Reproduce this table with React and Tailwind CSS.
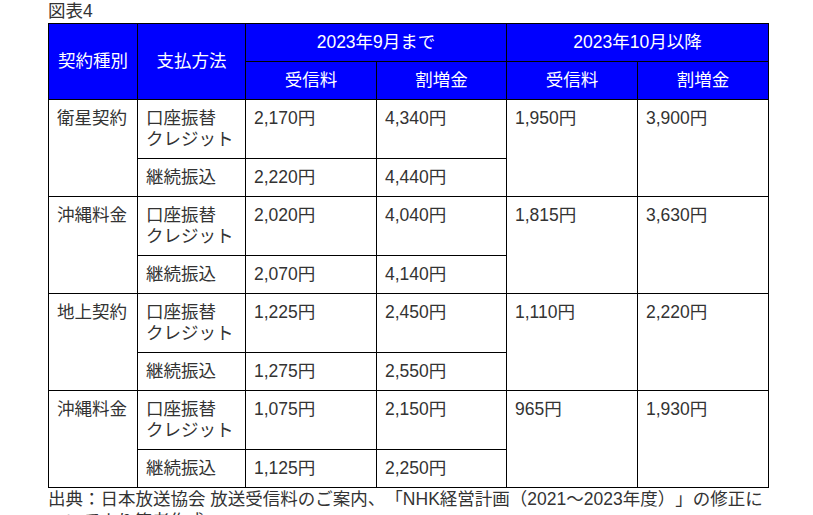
import React from "react";

const groups = [
  { type: "衛星契約", a1: "2,170円", b1: "4,340円", a2: "2,220円", b2: "4,440円", c: "1,950円", d: "3,900円" },
  { type: "沖縄料金", a1: "2,020円", b1: "4,040円", a2: "2,070円", b2: "4,140円", c: "1,815円", d: "3,630円" },
  { type: "地上契約", a1: "1,225円", b1: "2,450円", a2: "1,275円", b2: "2,550円", c: "1,110円", d: "2,220円" },
  { type: "沖縄料金", a1: "1,075円", b1: "2,150円", a2: "1,125円", b2: "2,250円", c: "965円", d: "1,930円" },
];

const td = "border border-black px-2 py-2 align-top text-left";
const th = "border border-black px-2 py-2 text-center font-normal text-white";

export default function App() {
  return (
    <div
      className="w-[813px] h-[515px] overflow-hidden bg-white text-[#333333] text-[17.5px] [text-spacing-trim:space-all]"
      style={{ fontFamily: '"Liberation Sans", Arial, "Noto Sans CJK JP", sans-serif' }}
    >
      <div className="pl-[48px] w-[768px]">
        <div className="leading-[23px]">図表4</div>
        <table className="w-[720px] table-fixed border-collapse leading-[21px]">
          <colgroup>
            <col className="w-[89px]" />
            <col className="w-[108px]" />
            <col className="w-[131px]" />
            <col className="w-[130px]" />
            <col className="w-[131px]" />
            <col className="w-[131px]" />
          </colgroup>
          <thead className="bg-[#0000ff]">
            <tr>
              <th rowSpan={2} className={th}>契約種別</th>
              <th rowSpan={2} className={th}>支払方法</th>
              <th colSpan={2} className={th}>2023年9月まで</th>
              <th colSpan={2} className={th}>2023年10月以降</th>
            </tr>
            <tr>
              <th className={th}>受信料</th>
              <th className={th}>割増金</th>
              <th className={th}>受信料</th>
              <th className={th}>割増金</th>
            </tr>
          </thead>
          <tbody>
            {groups.map((g, i) => (
              <React.Fragment key={i}>
                <tr>
                  <td rowSpan={2} className={td}>{g.type}</td>
                  <td className={td}>
                    口座振替
                    <br />
                    クレジット
                  </td>
                  <td className={td}>{g.a1}</td>
                  <td className={td}>{g.b1}</td>
                  <td rowSpan={2} className={td}>{g.c}</td>
                  <td rowSpan={2} className={td}>{g.d}</td>
                </tr>
                <tr>
                  <td className={td}>継続振込</td>
                  <td className={td}>{g.a2}</td>
                  <td className={td}>{g.b2}</td>
                </tr>
              </React.Fragment>
            ))}
          </tbody>
        </table>
        <div className="leading-[22px] whitespace-nowrap">
          出典：日本放送協会 放送受信料のご案内、「NHK経営計画（2021～2023年度）」の修正に
          <br />
          ついてより筆者作成
        </div>
      </div>
    </div>
  );
}
